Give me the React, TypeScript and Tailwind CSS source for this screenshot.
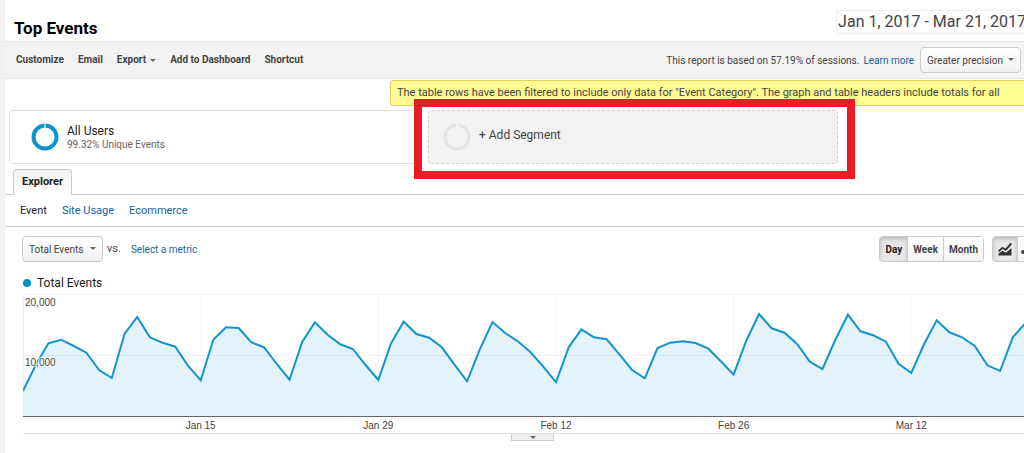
import type { ReactNode } from "react";
import clsx from "clsx";

// Plot is 122 units tall: 20,000 sits on the top grid line, 10,000 in the middle.
const PLOT_WIDTH = 1001;
const PLOT_HEIGHT = 122;
const DAY_STEP = 12.69;

const dailyEvents = [
  25, 51, 72.7, 76.3, 70, 63.3, 46, 38, 82, 99, 78.7, 73.3, 69.3, 50.3, 35.7, 76.3, 88.7, 88, 73.7, 68.7,
  52, 36.3, 74, 93.7, 81.3, 71.7, 67, 51, 36, 72.7, 94.3, 82, 78.3, 68.7, 51.3, 34.7, 66.7, 94, 83, 74.7,
  63.7, 49.3, 33.7, 68.7, 86.7, 78.7, 76.7, 61.7, 46, 37.7, 68, 73.3, 74.7, 73, 67.3, 54.7, 41.3, 75.3, 102, 87.7,
  83.3, 72, 54.3, 47, 76, 101.3, 84.7, 80.7, 74.3, 52.3, 43, 71.7, 95.7, 83.7, 78.7, 70, 50.7, 45, 78.7, 93,
];

const ticks = [
  { day: 14, label: "Jan 15" },
  { day: 28, label: "Jan 29" },
  { day: 42, label: "Feb 12" },
  { day: 56, label: "Feb 26" },
  { day: 70, label: "Mar 12" },
];

const toolbarItems = ["Customize", "Email", "Export", "Add to Dashboard", "Shortcut"];

export default function App() {
  return (
    <div className="overflow-hidden border-l-[5px] border-[#f1f1f1] bg-white pb-3 font-[Roboto,sans-serif] text-[#444]">
      <Header />
      <Toolbar />
      <div className="flex justify-end pt-px">
        <p className="w-[634px] rounded-l-sm border border-r-0 border-[#e0d355] bg-[#fffb93] pl-1.5 text-[11px] leading-6 whitespace-nowrap">
          The table rows have been filtered to include only data for "Event Category". The graph and table headers
          include totals for all
        </p>
      </div>
      <Segments />
      <Tabs />
      <Controls />
      <Chart />
    </div>
  );
}

function Header() {
  return (
    <header className="flex items-start justify-between pt-2.5 pb-px">
      <h1 className="pt-1.5 pl-[9px] text-[17px] leading-6 font-bold text-black">Top Events</h1>
      <button
        type="button"
        className="-mr-0.5 rounded-l border border-r-0 border-[#eee] pl-px text-left text-[16px] leading-[22px] whitespace-nowrap"
      >
        Jan 1, 2017 - Mar 21, 2017
      </button>
    </header>
  );
}

function Toolbar() {
  return (
    <div className="flex items-center justify-between border-y border-[#e5e5e5] bg-[#f3f3f3] py-[5px] pr-[3px] pl-[11px]">
      <nav className="flex gap-3.5 text-[10px] leading-4 font-bold">
        {toolbarItems.map((item) => (
          <button key={item} type="button" className="flex items-center gap-1">
            {item}
            {item === "Export" ? <Caret /> : null}
          </button>
        ))}
      </nav>
      <div className="flex items-center text-[10px]">
        <span>This report is based on 57.19% of sessions.</span>
        <a href="#sampling" className="mr-1.5 ml-1 text-[#15649f]">
          Learn more
        </a>
        <Dropdown label="Sampling precision" className="w-[101px]" options={["Greater precision", "Faster response"]} />
      </div>
    </div>
  );
}

function Caret() {
  return (
    <svg viewBox="0 0 6 3" className="h-[3px] w-[6px]" aria-hidden="true">
      <path d="M0 0h6L3 3z" fill="#666" />
    </svg>
  );
}

function Dropdown({ label, options, className }: { label: string; options: string[]; className: string }) {
  return (
    <div className={clsx("relative", className)}>
      <select
        aria-label={label}
        className="block h-[26px] w-full appearance-none rounded-sm border border-[#ccc] bg-linear-to-b from-white to-[#f1f1f1] pl-1.5 text-[10px] text-[#444]"
      >
        {options.map((option) => (
          <option key={option}>{option}</option>
        ))}
      </select>
      <span className="pointer-events-none absolute top-[11px] right-[7px] flex">
        <Caret />
      </span>
    </div>
  );
}

function Ring({ color, thickness }: { color: string; thickness: number }) {
  return (
    <svg viewBox="0 0 28 28" className="size-7" fill="none" aria-hidden="true">
      <circle cx="14" cy="14" r={13.5 - thickness / 2} stroke={color} strokeWidth={thickness} />
      <path d="M14 0v5" stroke="#fff" strokeWidth="1" />
    </svg>
  );
}

function Segments() {
  return (
    <section className="flex gap-[9px] pt-1 pl-1">
      <button
        type="button"
        className="flex h-[54px] max-w-[410px] flex-1 items-center gap-2 rounded-sm border border-[#e2e2e2] pl-[21px] text-left"
      >
        <Ring color="#0f93cd" thickness={4} />
        <span>
          <span className="block text-[12px] leading-4 text-[#222]">All Users</span>
          <span className="block text-[10px] leading-3 text-[#666]">99.32% Unique Events</span>
        </span>
      </button>
      <div className="relative max-w-[410px] flex-1">
        <button
          type="button"
          className="flex h-[54px] w-full items-center gap-2 rounded-sm border border-dashed border-[#d4d4d4] bg-[#f2f2f2] pl-3.5 text-left text-[12px]"
        >
          <Ring color="#e4e4e4" thickness={3} />
          <span className="pb-1">+ Add Segment</span>
        </button>
        <div className="pointer-events-none absolute -top-[11px] -right-[17px] -bottom-[15px] -left-[14px] border-[8px] border-[#ed1c24]" />
      </div>
    </section>
  );
}

function Tabs() {
  return (
    <>
      <div className="flex border-b border-[#ccc] pt-[5px] pl-2">
        <button
          type="button"
          className="-mb-px rounded-t-sm border border-b-0 border-[#ccc] bg-linear-to-b from-[#f3f3f3] to-white px-2 pb-px text-[11px] leading-6 font-bold text-[#222]"
        >
          Explorer
        </button>
      </div>
      <nav className="flex gap-[15px] border-b border-[#ccc] py-2 pl-[15px] text-[11px] leading-[15px] text-[#15649f]">
        <a href="#event" className="text-[#222]">
          Event
        </a>
        <a href="#site-usage">Site Usage</a>
        <a href="#ecommerce">Ecommerce</a>
      </nav>
    </>
  );
}

function GroupButton({ active, label, children }: { active?: boolean; label?: string; children: ReactNode }) {
  return (
    <button
      type="button"
      aria-label={label}
      aria-pressed={active ?? false}
      className={clsx(
        "flex h-6 items-center border-r border-[#ccc] px-[5px] last:border-r-0",
        active
          ? "bg-[#e8e8e8] text-[#222] inset-shadow-sm inset-shadow-black/20"
          : "bg-linear-to-b from-white to-[#f3f3f3]",
      )}
    >
      {children}
    </button>
  );
}

function Controls() {
  return (
    <div className="flex items-center justify-between pt-[9px] pl-[17px]">
      <div className="flex items-center gap-1 text-[10px]">
        <Dropdown label="Metric" className="w-[81px]" options={["Total Events", "Unique Events"]} />
        <span className="text-[11px]">vs.</span>
        <a href="#metric" className="ml-1.5 text-[#15649f]">
          Select a metric
        </a>
      </div>
      <div className="flex gap-2 text-[10px] font-bold">
        <div className="flex overflow-hidden rounded-sm border border-[#ccc]">
          <GroupButton active>Day</GroupButton>
          <GroupButton>Week</GroupButton>
          <GroupButton>Month</GroupButton>
        </div>
        <div className="flex w-8 overflow-hidden rounded-l-sm border border-r-0 border-[#ccc]">
          <GroupButton active label="Line chart">
            <svg viewBox="0 0 14 14" className="size-3.5 shrink-0" aria-hidden="true">
              <path d="M.5 13.500v-2L4.500 8.700l3.500 2.100L13.500 6v7.500z" fill="#333" />
              <path d="M.5 9.200 4.500 5.800l3.300 1.900L13.300 1.500" fill="none" stroke="#333" strokeWidth="1.900" />
            </svg>
          </GroupButton>
          <GroupButton label="Motion chart">
            <svg viewBox="0 0 14 14" className="-ml-1 size-3.5 shrink-0" aria-hidden="true">
              <circle cx="4" cy="10" r="2" fill="#444" />
              <circle cx="10" cy="5" r="4" fill="#444" />
            </svg>
          </GroupButton>
        </div>
      </div>
    </div>
  );
}

function Chart() {
  const baseline = PLOT_HEIGHT;
  const line = dailyEvents
    .map((height, day) => `${day === 0 ? "M" : "L"}${(day * DAY_STEP).toFixed(1)} ${(baseline - height).toFixed(1)}`)
    .join("");
  const lastX = (dailyEvents.length - 1) * DAY_STEP;
  const halo = "[text-shadow:0_0_2px_#fff,1px_0_1px_#fff,-1px_0_1px_#fff,0_1px_1px_#fff,0_-1px_1px_#fff]";

  return (
    <section className="pt-3 pl-[18px]">
      <h2 className="flex items-center gap-1.5 text-[12px] leading-[18px] text-[#222]">
        <span className="size-2 rounded-full bg-[#058dc7]" />
        Total Events
      </h2>
      <div className="relative mt-0.5 font-['Liberation_Sans',sans-serif] text-[10px] leading-3">
        <svg
          viewBox={`0 0 ${PLOT_WIDTH} ${PLOT_HEIGHT}`}
          preserveAspectRatio="none"
          className="block h-[122px] w-full"
          role="img"
          aria-label="Total Events"
        >
          <path d={`M0 .5H${PLOT_WIDTH}M.5 0V${PLOT_HEIGHT}`} stroke="#f0f0f0" />
          {ticks.map(({ day }) => (
            <path key={day} d={`M${day * DAY_STEP} 0V${PLOT_HEIGHT}`} stroke="#f7f7f7" />
          ))}
          <path d={`${line}L${lastX} ${baseline}L0 ${baseline}z`} fill="#e4f2fa" />
          <path d={`M0 61.500H${PLOT_WIDTH}`} stroke="#000" strokeOpacity=".06" />
          <path d={line} fill="none" stroke="#1394cf" strokeWidth="2" vectorEffect="non-scaling-stroke" />
        </svg>
        <span className={clsx("absolute top-[3px] left-0.5", halo)}>20,000</span>
        <span className={clsx("absolute top-[63px] left-0.5", halo)}>10,000</span>
        <div className="relative h-[18px] border-t border-b border-t-[#666] border-b-[#ddd]">
          {ticks.map(({ day, label }) => (
            <span
              key={day}
              className="absolute top-[3px] -translate-x-1/2"
              style={{ left: `${((day * DAY_STEP) / PLOT_WIDTH) * 100}%` }}
            >
              {label}
            </span>
          ))}
        </div>
      </div>
      <div className="flex justify-center pl-[18px]">
        <button
          type="button"
          aria-label="Toggle annotations"
          className="flex h-[7px] w-[43px] items-center justify-center border border-t-0 border-[#ccc] bg-[#eee]"
        >
          <Caret />
        </button>
      </div>
    </section>
  );
}
